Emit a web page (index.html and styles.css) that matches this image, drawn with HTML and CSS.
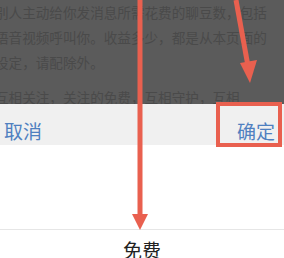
FILE: index.html
```html
<!DOCTYPE html>
<html lang="zh">
<head>
<meta charset="utf-8">
<link rel="stylesheet" href="styles.css">
</head>
<body>
<div class="screen">
  <div class="overlay">
    <div class="desc">
      <p class="para">别人主动给你发消息所需花费的聊豆数，包括<br>语音视频呼叫你。收益多少，都是从本页面的<br>设定，请配除外。</p>
      <p class="para second">互相关注，关注的免费，互相守护，互相</p>
    </div>
  </div>
  <div class="actions">
    <span class="btn">取消</span>
    <span class="btn">确定</span>
  </div>
  <div class="picker">
    <div class="spacer"></div>
    <div class="option">免费</div>
  </div>
  <div class="highlight"></div>
  <svg class="arrows" width="284" height="258" viewBox="0 0 284 258">
    <line x1="140" y1="0" x2="140" y2="216" stroke="#e9604f" stroke-width="5"/>
    <polygon points="132,214 148,214 140,230" fill="#e9604f"/>
    <line x1="236" y1="0" x2="248" y2="66" stroke="#e9604f" stroke-width="5"/>
    <polygon points="240,63 257,60 250,83" fill="#e9604f"/>
  </svg>
</div>
</body>
</html>
```
FILE: styles.css
```css
html, body {
  margin: 0;
  padding: 0;
}
body {
  width: 284px;
  height: 258px;
  overflow: hidden;
  font-family: "Noto Sans CJK SC", "Noto Sans", sans-serif;
  background: #ffffff;
}
.screen {
  position: relative;
  width: 284px;
  height: 258px;
  overflow: hidden;
}
.overlay {
  height: 104px;
  background: #5b5b5b;
  overflow: hidden;
}
.desc {
  margin-left: -5px;
  width: 300px;
}
.para {
  margin: 0;
  font-size: 13.6px;
  line-height: 25px;
  color: #4a4a4a;
  white-space: nowrap;
}
.para.second {
  margin-top: 10px;
}
.actions {
  height: 41px;
  box-sizing: border-box;
  padding: 17px 9px 0 4px;
  background: #f0f0f0;
  display: flex;
  justify-content: space-between;
  align-items: flex-start;
}
.btn {
  font-size: 19px;
  line-height: 19px;
  color: #4f80c0;
}
.picker {
  background: #ffffff;
}
.spacer {
  height: 84px;
  border-bottom: 1px solid #e6e6e6;
}
.option {
  text-align: center;
  font-size: 19px;
  line-height: 19px;
  padding-top: 10px;
  color: #222222;
}
.highlight {
  position: absolute;
  left: 216px;
  top: 102px;
  width: 58px;
  height: 37px;
  border: 4px solid #e9604f;
}
.arrows {
  position: absolute;
  left: 0;
  top: 0;
}
```
